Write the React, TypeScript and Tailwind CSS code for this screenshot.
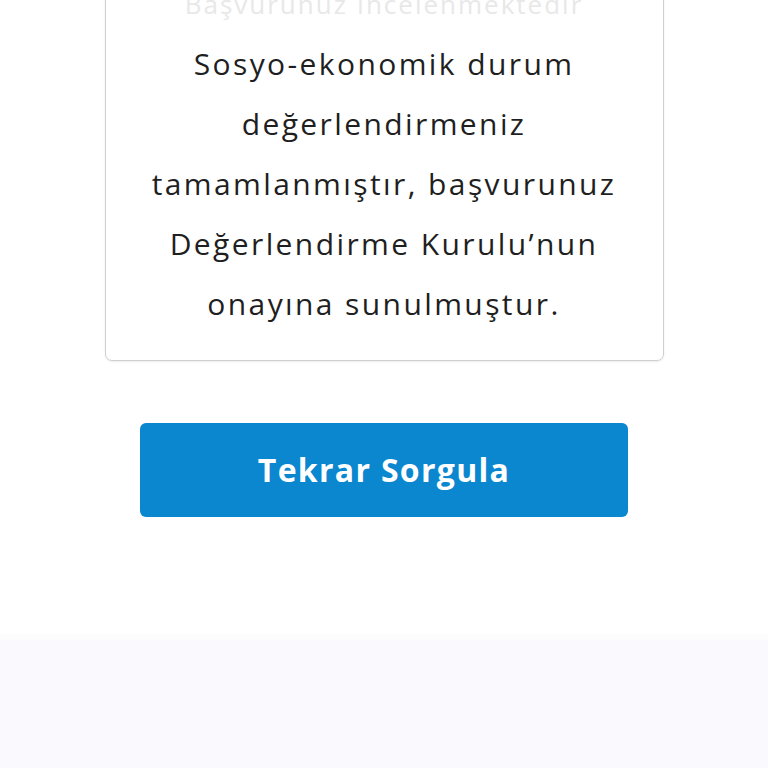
export default function App() {
  return (
    <div className="w-[768px] h-[768px] overflow-hidden bg-white flex flex-col" style={{ fontFamily: '"Open Sans", "Noto Sans", sans-serif' }}>
      <div className="flex flex-col items-center h-[634px]">
        <div className="mt-[-40px] w-[559px] border border-[#cfcfcf] rounded-[7px] pt-[13px] pb-[26px] flex flex-col items-center text-center text-[#1f1f1f] text-[30px] tracking-[2.4px] leading-[60px] shadow-[0_1px_2px_rgba(0,0,0,0.08)]">
          <div className="text-[#e8e8e8] leading-[40px] mb-[10px] mt-[10px] text-[26px] tracking-[2px]">Başvurunuz İncelenmektedir</div>
          <div>Sosyo-ekonomik durum</div>
          <div>değerlendirmeniz</div>
          <div>tamamlanmıştır, başvurunuz</div>
          <div>Değerlendirme Kurulu’nun</div>
          <div>onayına sunulmuştur.</div>
        </div>
        <button className="mt-[62px] w-[488px] h-[94px] bg-[#0a87cf] rounded-[6px] text-white text-[32px] tracking-[1.3px] font-bold flex items-center justify-center">
          Tekrar Sorgula
        </button>
      </div>
      <div className="h-[6px] bg-[#fcfcfd]" />
      <div className="flex-1 bg-[#f9f9fe]" />
    </div>
  );
}
